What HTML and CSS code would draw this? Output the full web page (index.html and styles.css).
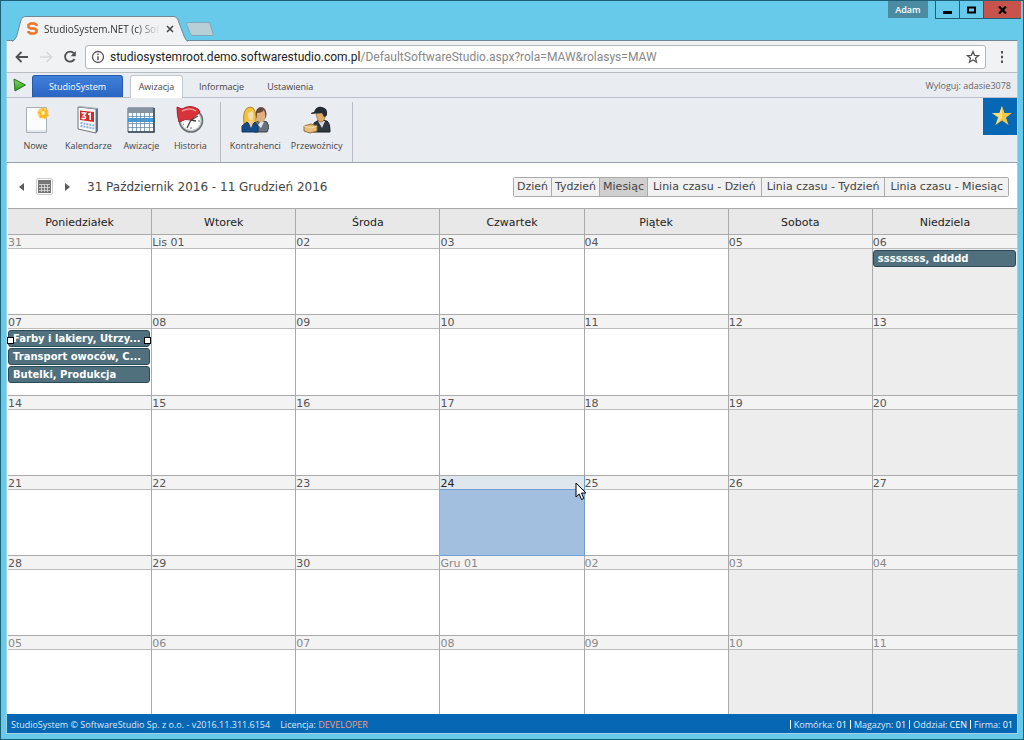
FILE: index.html
```html
<!DOCTYPE html>
<html lang="pl">
<head>
<meta charset="utf-8">
<title>StudioSystem.NET (c) SoftwareStudio</title>
<link rel="stylesheet" href="styles.css">
</head>
<body>
<div class="window">
  <header class="titlebar">
    <div class="tab">
      <svg class="tab-shape" viewBox="0 0 176 26" width="176" height="26"><path d="M0 25.5 C3 24 4 22 5 19 L9 4 Q10 .5 13 .5 H162 Q165 .5 166 4 L172 20 Q174 25 176 25.500" fill="#f1f2f4" stroke="#6f8a96"/></svg>
      <svg class="tab-icon" viewBox="0 0 11 13" width="11" height="13"><path d="M9.500 4V3L7.500 1.500H3.500L1.500 3V5L3.500 6.500H7.500L9.500 8V10L7.500 11.500H3.500L1.500 10V9" fill="none" stroke="#ee7626" stroke-width="2.600"/></svg>
      <span class="tab-title">StudioSystem.NET (c) Sof</span>
      <button class="bare tab-close" aria-label="Zamknij kartę"><svg viewBox="0 0 8 8" width="8" height="8"><path d="M1 1l6 6M7 1L1 7" stroke="#444" stroke-width="1.500"/></svg></button>
    </div>
    <button class="bare new-tab" aria-label="Nowa karta"><svg viewBox="0 0 28 14" width="28" height="14"><path d="M2 .5H22Q23.500 .5 24 2L27.500 13Q27.500 13.500 26 13.500H7Q5 13.500 4.500 12L.5 2Q.5 .5 2 .5Z" fill="#b9cfd7" stroke="#7fa9b8"/></svg></button>
    <div class="window-side">
      <button class="user">Adam</button>
      <div class="window-controls">
        <button class="control" aria-label="Minimalizuj"><svg viewBox="0 0 9 8" width="9" height="8"><path d="M0 5h9v3H0z"/></svg></button>
        <button class="control" aria-label="Maksymalizuj"><svg viewBox="0 0 9 8" width="9" height="8"><path d="M1 1.500h7v5H1z" fill="none" stroke="#000" stroke-width="2"/></svg></button>
        <button class="control close" aria-label="Zamknij"><svg viewBox="0 0 9 8" width="9" height="8"><path d="M1 .5l7 7M8 .5l-7 7" stroke="#000" stroke-width="2.200"/></svg></button>
      </div>
    </div>
  </header>

  <div class="client">
    <div class="address-row">
      <button class="bare" aria-label="Wstecz"><svg viewBox="0 0 14 12" width="14" height="12"><path d="M13 6H2M6.500 1L1.500 6l5 5" fill="none" stroke="#505050" stroke-width="1.800"/></svg></button>
      <button class="bare" aria-label="Dalej"><svg viewBox="0 0 14 12" width="14" height="12"><path d="M1 6h11M7.500 1l5 5-5 5" fill="none" stroke="#d5d7d9" stroke-width="1.600"/></svg></button>
      <button class="bare" aria-label="Odśwież"><svg viewBox="0 0 14 14" width="14" height="14"><path d="M11.500 9A5 5 0 1 1 11 3.500" fill="none" stroke="#505050" stroke-width="1.800"/><path d="M12.800 1v5.200H7.600z" fill="#505050"/></svg></button>
      <div class="address">
        <svg viewBox="0 0 14 14" width="14" height="14"><circle cx="7" cy="7" r="5.500" fill="none" stroke="#555" stroke-width="1.300"/><path d="M7 6.200v4M7 3.500v1.500" stroke="#555" stroke-width="1.500"/></svg>
        <span class="url"><span class="host">studiosystemroot.demo.softwarestudio.com.pl</span>/DefaultSoftwareStudio.aspx?rola=MAW&amp;rolasys=MAW</span>
        <button class="bare" aria-label="Dodaj zakładkę"><svg viewBox="0 0 14 14" width="14" height="14"><path d="M7 1.500l1.600 3.800 4 .3-3.100 2.600 1 4L7 10l-3.500 2.200 1-4L1.400 5.600l4-.3z" fill="none" stroke="#555" stroke-width="1.300"/></svg></button>
      </div>
      <button class="bare menu" aria-label="Menu"><svg viewBox="0 0 4 12" width="4" height="12"><path d="M1 0h2v2.500H1zM1 4.700h2v2.500H1zM1 9.400h2v2.500H1z" fill="#505050"/></svg></button>
    </div>

    <nav class="module-tabs">
      <button class="bare play" aria-label="Start"><svg viewBox="0 0 14 14" width="14" height="14"><defs><linearGradient id="go" x2="0" y2="1"><stop stop-color="#8ad66a"/><stop offset="1" stop-color="#2b9a20"/></linearGradient></defs><path d="M1 1L12.500 7 2 13z" fill="url(#go)" stroke="#22761d" stroke-linejoin="round"/></svg></button>
      <button class="module primary">StudioSystem</button>
      <button class="module active">Awizacja</button>
      <button class="module info">Informacje</button>
      <button class="module">Ustawienia</button>
      <a class="logout" href="#">Wyloguj: adasie3078</a>
    </nav>

    <div class="ribbon">
      <div class="group">
        <button class="tool"><svg viewBox="0 0 28 28" width="28" height="28"><path d="M4.500 1.500h20v25h-20z" fill="#fbfcfd" stroke="#a9b0b8"/><path d="M5 24h19v2H5z" fill="#e5e9ef"/><circle cx="21" cy="7" r="5.500" fill="#fbc02e" opacity=".75"/><path d="M21 1l1.500 4 4-1.500-2 4 3 2.500-4 .5-.5 3-2-2.500-3.500 1.500 1-4-3-2.500 4-.5z" fill="#ffb51e"/><circle cx="21" cy="7" r="2" fill="#fff29a"/></svg>Nowe</button>
        <button class="tool"><svg viewBox="0 0 28 28" width="28" height="28"><path d="M4 1l18 2v24L4 23z" fill="#fafafa" stroke="#707780"/><path d="M22 3l2-1v23l-2 2z" fill="#5f7180"/><path d="M4 1l2-1 18 2-2 1z" fill="#a7b1ba"/><path d="M6 4.500l14 1.500v10L6 14z" fill="#d32a24"/><path d="M7.500 6.800l4 .4-2 2.500q2.500 0 2 2-.5 1.500-4 .5M14 8.500l2.200-1v6.500" fill="none" stroke="#fff" stroke-width="1.600"/><path d="M6.500 17l14 2.500M6.500 20l14 2.500" stroke="#8bb0dc" stroke-width="2" stroke-dasharray="2 1"/></svg>Kalendarze</button>
        <button class="tool"><svg viewBox="0 0 28 28" width="28" height="28"><path d="M1 2h26v24H1z" fill="#fafcff" stroke="#4f5f70"/><path d="M1 2h26v5H1z" fill="#8494a1"/><path d="M1 12h26v4H1z" fill="#3b9de0"/><path d="M5.500 7v19M9.500 7v19M13.500 7v19M17.500 7v19M22.500 7v19M1 10.500h26M1 17.500h26M1 21.500h26" stroke="#6a8daa" stroke-width=".8"/><path d="M27 2v24H1" fill="none" stroke="#3c4a58" stroke-width="1.500"/></svg>Awizacje</button>
        <button class="tool"><svg viewBox="0 0 28 28" width="28" height="28"><circle cx="15" cy="14.500" r="11.500" fill="#c5cacd" stroke="#6c7074" stroke-width="1.600"/><circle cx="15" cy="14.500" r="9.500" fill="#fbfbfb"/><path d="M1 1l5 2q8-5 16 0l2 3-9 8q-5-2-12 2Q1 10 1 1z" fill="#d8333b" stroke="#a3202b"/><path d="M6 5q8-4 14 0" fill="none" stroke="#f29a92" stroke-width="1.500"/><path d="M15 14l7-4M15 14l-4 8M15 14l5 1" stroke="#444" stroke-width="1.300"/><path d="M15 21v2M22 15h2M7 18l1 .5" stroke="#777"/></svg>Historia</button>
      </div>
      <div class="group">
        <button class="tool"><svg viewBox="0 0 28 28" width="28" height="28"><path d="M13 26v-9l6-3 7 2 2 5-2 5z" fill="#69727c" stroke="#3c444d"/><path d="M20 15l-3 4 3 3 3-6z" fill="#dfe6ec"/><ellipse cx="20" cy="8" rx="5.500" ry="7" fill="#67483a"/><path d="M16 7q5 0 7-3 3 7-1 12-4 1-6-3z" fill="#dfb083"/><path d="M3 18Q1 2 9 1q7 0 6 17z" fill="#f0c43c" stroke="#b4861f"/><path d="M7 7q4-1 4-3 3 7 0 11-4 0-4-8z" fill="#f6dcb4"/><path d="M1 26V20l5-4 4 4 4-4 3 4v6z" fill="#164c86" stroke="#12365e"/><path d="M7 15l3 7 3-7z" fill="#efc99a"/></svg>Kontrahenci</button>
        <button class="tool"><svg viewBox="0 0 28 28" width="28" height="28"><path d="M10 26l1-9 5-3 8 1q3 2 3 11z" fill="#303841" stroke="#171b20"/><path d="M15 15l4 7 3-7z" fill="#d6dde2"/><path d="M13 7h9v5q-2 5-5 4-3-1-4-9z" fill="#e1ab67" stroke="#855d2c" stroke-width=".6"/><path d="M11 6q2-6 8-5 6 1 5 8-1 2-3 2L19 7 8 8q0-2 3-2z" fill="#252c33"/><path d="M1 20l7-2 6 2v5l-7 2-6-2z" fill="#e6bd79" stroke="#96703a"/><path d="M1 20l7 2 6-2" fill="none" stroke="#f6deb0"/></svg>Przewoźnicy</button>
      </div>
      <button class="favorite" aria-label="Ulubione"><svg viewBox="0 0 20 20" width="20" height="20"><path d="M10 0l2.500 7H20l-6 4.500 2.500 7.500L10 14.500 3.500 19 6 11.500 0 7h7.500z" fill="#f1c74c"/><path d="M10 0v12L3.500 19 7 11 0 7h7.500z" fill="#fbe07c"/></svg></button>
    </div>

    <div class="schedule-bar">
      <button class="bare" aria-label="Poprzedni"><svg viewBox="0 0 5 8" width="5" height="8"><path d="M5 0v8L0 4z" fill="#5c5c5c"/></svg></button>
      <button class="bare pick" aria-label="Wybierz datę"><svg viewBox="0 0 13 13" width="13" height="13"><path d="M0 0h13v13H0z" fill="#777"/><path d="M1 4.500h11M1 7.500h11M1 10.500h11M3.500 4v8M6.500 4v8M9.500 4v8" stroke="#ddd" stroke-width=".8"/></svg></button>
      <button class="bare" aria-label="Następny"><svg viewBox="0 0 5 8" width="5" height="8"><path d="M0 0v8l5-4z" fill="#5c5c5c"/></svg></button>
      <span class="range">31 Październik 2016 - 11 Grudzień 2016</span>
      <div class="views">
        <button>Dzień</button><button>Tydzień</button><button class="current">Miesiąc</button><button class="timeline">Linia czasu - Dzień</button><button class="timeline">Linia czasu - Tydzień</button><button class="timeline">Linia czasu - Miesiąc</button>
      </div>
    </div>

    <table class="calendar">
      <thead><tr><th>Poniedziałek</th><th>Wtorek</th><th>Środa</th><th>Czwartek</th><th>Piątek</th><th>Sobota</th><th>Niedziela</th></tr></thead>
      <tbody>
        <tr><td class="other"><div class="date">31</div></td><td><div class="date">Lis 01</div></td><td><div class="date">02</div></td><td><div class="date">03</div></td><td><div class="date">04</div></td><td><div class="date">05</div></td><td><div class="date">06</div><div class="event">ssssssss, ddddd</div></td></tr>
        <tr class="busy"><td><div class="date">07</div><div class="event selected">Farby i lakiery, Utrzy...</div><div class="event">Transport owoców, C...</div><div class="event">Butelki, Produkcja</div></td><td><div class="date">08</div></td><td><div class="date">09</div></td><td><div class="date">10</div></td><td><div class="date">11</div></td><td><div class="date">12</div></td><td><div class="date">13</div></td></tr>
        <tr><td><div class="date">14</div></td><td><div class="date">15</div></td><td><div class="date">16</div></td><td><div class="date">17</div></td><td><div class="date">18</div></td><td><div class="date">19</div></td><td><div class="date">20</div></td></tr>
        <tr><td><div class="date">21</div></td><td><div class="date">22</div></td><td><div class="date">23</div></td><td class="picked"><div class="date">24</div><svg class="pointer" viewBox="0 0 12 19" width="12" height="19"><path d="M1 1v14l3.200-3 2.300 5.500 2.300-1L6.500 11H11z" fill="#fff" stroke="#000"/></svg></td><td><div class="date">25</div></td><td><div class="date">26</div></td><td><div class="date">27</div></td></tr>
        <tr><td><div class="date">28</div></td><td><div class="date">29</div></td><td><div class="date">30</div></td><td class="other"><div class="date">Gru 01</div></td><td class="other"><div class="date">02</div></td><td class="other"><div class="date">03</div></td><td class="other"><div class="date">04</div></td></tr>
        <tr><td class="other"><div class="date">05</div></td><td class="other"><div class="date">06</div></td><td class="other"><div class="date">07</div></td><td class="other"><div class="date">08</div></td><td class="other"><div class="date">09</div></td><td class="other"><div class="date">10</div></td><td class="other"><div class="date">11</div></td></tr>
      </tbody>
    </table>

    <footer class="status">
      <span>StudioSystem © SoftwareStudio Sp. z o.o. - v2016.11.311.6154</span>
      <span>Licencja: <span class="license">DEVELOPER</span></span>
      <ul class="context"><li>Komórka: <b>01</b></li><li>Magazyn: <b>01</b></li><li>Oddział: <b>CEN</b></li><li>Firma: <b>01</b></li></ul>
    </footer>
  </div>
</div>
</body>
</html>
```
FILE: styles.css
```css
* { box-sizing: border-box; }
body { margin: 0; font: 9px/14px "Open Sans", "Noto Sans", sans-serif; color: #444; }
button { font: inherit; color: inherit; margin: 0; }
svg { display: block; flex: none; }
.bare { border: 0; padding: 0; background: none; }

.window { min-height: 100vh; display: flex; flex-direction: column; background: #67caea; border: 1px solid #1d5f75; padding: 0 5px 5px; }
.client { flex: 1; display: flex; flex-direction: column; background: #fff; border: 1px solid #9fd3e4; border-top-color: #6f8a96; }

.titlebar { height: 39px; display: flex; align-items: flex-end; margin-right: -3px; padding-left: 6px; }
.tab { position: relative; width: 176px; height: 25px; display: flex; align-items: center; gap: 6px; padding: 0 18px 0 15px; margin-bottom: -1px; z-index: 1; }
.tab-shape { position: absolute; left: 0; top: 0; }
.tab-icon, .tab-title, .tab-close { position: relative; }
.tab-title { flex: 1; white-space: nowrap; font-size: 10px; color: #333; mask-image: linear-gradient(90deg, #000 80%, transparent); }
.new-tab { margin: 0 0 4px -2px; }
.window-side { margin-left: auto; align-self: flex-start; display: flex; gap: 7px; }
.user { width: 40px; height: 17px; border: 0; padding: 0; background: #4a8ba1; color: #fff; font-weight: 600; }
.window-controls { display: flex; }
.control { width: 24px; height: 18px; display: grid; place-items: center; padding: 0; background: #67caea; border: 1px solid #1d5f75; border-width: 0 0 1px 1px; }
.control.close { width: 38px; background: #c6544c; }

.address-row { height: 32px; display: flex; align-items: center; gap: 10px; padding: 0 13px 0 8px; background: #f1f2f4; border-bottom: 1px solid #b9bdc1; }
.address { flex: 1; height: 24px; display: flex; align-items: center; gap: 5px; margin-left: -2px; padding: 0 5px; background: #fff; border: 1px solid #b4b7ba; border-radius: 3px; }
.url { flex: 1; font: 12px/16px Roboto, sans-serif; color: #888; }
.host { color: #222; }
.menu { margin-left: 4px; }

.module-tabs { height: 25px; display: flex; align-items: flex-end; padding: 0 6px 0 6px; background: #e9ecf1; border-bottom: 1px solid #b9bfca; }
.play { align-self: center; margin-right: 5px; }
.module { height: 22px; padding: 1px 10px 0; border: 0; background: none; }
.module.primary { width: 91px; margin-right: 7px; background: linear-gradient(#3f80db, #2a66c2); border: 1px solid #2859a8; border-bottom: 0; border-radius: 3px 3px 0 0; color: #fff; }
.module.active { width: 53px; padding: 0; height: 23px; margin-bottom: -1px; background: #fff; border: 1px solid #c3c8d0; border-bottom: 0; border-radius: 3px 3px 0 0; }
.module.info { margin: 0 3px 0 6px; }
.logout { margin: 0 0 4px auto; color: #666; text-decoration: none; }

.ribbon { height: 65px; display: flex; align-items: flex-start; background: #e9ecf1; border-bottom: 1px solid #9aa0b0; }
.group { height: 60px; display: flex; margin-top: 4px; padding: 0 5px 0 4px; border-right: 1px solid #b9bdc6; }
.tool { min-width: 49px; display: flex; flex-direction: column; align-items: center; gap: 5px; padding: 4px 5px 0; border: 0; background: none; }
.favorite { width: 34px; height: 37px; margin-left: auto; display: grid; place-items: center; padding: 0 0 2px 3px; border: 0; background: #0667b5; }

.schedule-bar { height: 45px; display: flex; align-items: center; gap: 12px; padding: 2px 8px 0 12px; font: 12px/16px "DejaVu Sans", sans-serif; }
.pick { padding: 1px; border: 1px solid #ccc; border-radius: 2px; }
.range { margin-left: 5px; }
.views { display: flex; margin-left: auto; font-size: 11px; border: 1px solid #aaa; border-radius: 2px; }
.views button { height: 18px; padding: 0 3px; border: 0; border-right: 1px solid #aaa; background: #f1f1f1; color: #444; }
.views .timeline { padding: 0 5px; }
.views button:last-child { border-right: 0; }
.views .current { background: #cfcfcf; }

.calendar { width: calc(100% - 1px); margin-left: 1px; flex: none; table-layout: fixed; border-collapse: separate; border-spacing: 0; font: 11px/15px "DejaVu Sans", sans-serif; color: #555; }
.calendar th { height: 27px; padding: 1px 0 0; background: #e8e8e8; border: 1px solid #aaa; border-width: 1px 1px 1px 0; font-weight: 400; color: #222; }
.calendar td { position: relative; height: 80px; padding: 0; vertical-align: top; border: 1px solid #aaa; border-width: 0 1px 1px 0; }
.calendar th:last-child, .calendar td:last-child { border-right: 0; }
.calendar .busy td { height: 81px; }
.calendar tbody tr:last-child td { border-bottom: 0; height: 78px; }
.calendar td:nth-child(n+6) { background: #ededed; }
.calendar .other { color: #888; }
.date { height: 14px; background: #f3f3f3; border-bottom: 1px solid #bbb; }
.calendar .picked { background: #a2bfe0; border-color: #6f9fd0; color: #222; }
.picked .date { background: #dfe7ee; border-bottom-color: #6f9fd0; }
.pointer { position: absolute; right: -3px; top: 6px; z-index: 1; }
.event { position: relative; height: 17px; margin: 1px 1px 1px 0; padding: 0 4px; background: #50707e; border: 1px solid #2c4957; border-radius: 3px; color: #fff; font-size: 10px; font-weight: 700; white-space: nowrap; }
.event.selected::before, .event.selected::after { content: ""; position: absolute; top: 6px; width: 5px; height: 5px; background: #fff; border: 1px solid #000; }
.event.selected::before { left: -2px; }
.event.selected::after { right: -2px; }

.status { flex: 1; min-height: 19px; display: flex; align-items: center; gap: 10px; padding: 2px 4px 0; background: #0667b5; color: #dcebf7; }
.license { color: #f39a7d; }
.context { display: flex; gap: 3px; margin: 0 0 0 auto; padding: 0; list-style: none; line-height: 9px; }
.context li { padding-left: 3px; border-left: 1px solid #fff; }
.context b { font-weight: 400; color: #fff; }
```
